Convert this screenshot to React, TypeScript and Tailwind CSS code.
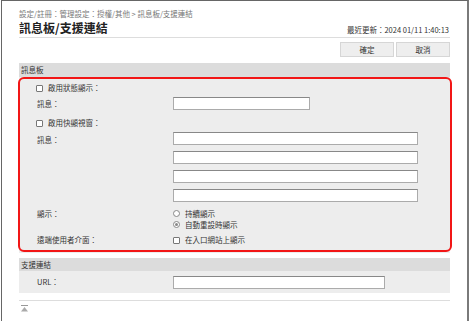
import React from 'react';

const font = { fontFamily: '"Noto Sans CJK TC", "Noto Sans", sans-serif' };

const Box: React.FC = () => (
  <span className="inline-block w-[7px] h-[7px] border border-[#777] bg-white rounded-[1px] shrink-0" />
);

const Radio: React.FC<{ on?: boolean }> = ({ on }) => (
  <span className="inline-flex items-center justify-center w-[7px] h-[7px] rounded-full border border-[#888] bg-white shrink-0">
    {on && <span className="w-[3px] h-[3px] rounded-full bg-[#888]" />}
  </span>
);

const Field: React.FC<{ w: string }> = ({ w }) => (
  <div className={`${w} h-[13px] bg-white border border-[#ababab] border-t-[#888]`} />
);

const Row: React.FC<{ label?: string; children?: React.ReactNode; className?: string }> = ({ label, children, className }) => (
  <div className={`flex ${className ?? ''}`}>
    <div className="w-[154px] shrink-0 pl-[18px]">{label}</div>
    <div className="flex-1">{children}</div>
  </div>
);

export default function App() {
  return (
    <div style={font} className="w-[470px] h-[321px] bg-white overflow-hidden text-[#333]">
      <div className="relative ml-[1px] mr-[1px] h-[321px] border-l border-t border-r-2 border-[#666] border-r-[#7a7a7a] pl-[17px] pr-[17px] pt-[8px]">
        <div className="text-[7.5px] leading-[10px] text-[#777]">設定/註冊：管理設定：授權/其他 &gt; 訊息板/支援連結</div>

        <div className="flex items-end justify-between h-[19px] border-b border-[#ddd] pb-[1px]">
          <div className="text-[12px] leading-[16px] font-bold text-[#222]">訊息板/支援連結</div>
          <div className="text-[7.5px] leading-[12px] text-[#333] pr-[1px]">最近更新：2024 01/11 1:40:13</div>
        </div>

        <div className="flex justify-end gap-[2px] mt-[4px]">
          <div className="w-[54px] h-[15px] bg-[#eee] border border-[#d6d6d6] flex items-center justify-center text-[7.5px]">確定</div>
          <div className="w-[54px] h-[15px] bg-[#eee] border border-[#d6d6d6] flex items-center justify-center text-[7.5px]">取消</div>
        </div>

        <div className="mt-[6px] h-[14px] bg-[#dcdcdc] flex items-center pl-[2px] text-[7.5px]">訊息板</div>

        <div className="relative bg-[#ededed] text-[7.5px] pt-[4px] pb-[7px]">
          <div className="absolute -left-[1px] -right-[2px] top-0 bottom-[1px] border-2 border-[#f21616] rounded-[6px] pointer-events-none" />
          <div className="flex items-center h-[14px] pl-[17px] gap-[5px]">
            <Box />
            <span>啟用狀態顯示：</span>
          </div>
          <Row label="訊息：" className="items-center mt-[2px]">
            <Field w="w-[137px]" />
          </Row>
          <div className="flex items-center h-[14px] pl-[17px] gap-[5px] mt-[6px]">
            <Box />
            <span>啟用快顯視窗：</span>
          </div>
          <Row label={undefined} className="mt-[2px]">
            <div className="relative flex flex-col gap-[6px]">
              <div className="absolute -left-[154px] top-[1px] pl-[18px] leading-[13px]">訊息：</div>
              <Field w="w-[245px]" />
              <Field w="w-[245px]" />
              <Field w="w-[245px]" />
              <Field w="w-[245px]" />
            </div>
          </Row>
          <Row label="顯示：" className="mt-[6px] leading-[11px]">
            <div className="flex flex-col">
              <div className="flex items-center gap-[5px] h-[11px]"><Radio /><span>持續顯示</span></div>
              <div className="flex items-center gap-[5px] h-[11px]"><Radio on /><span>自動重設時顯示</span></div>
            </div>
          </Row>
          <Row label="遠端使用者介面：" className="mt-[4px] items-center h-[12px]">
            <div className="flex items-center gap-[5px]"><Box /><span>在入口網站上顯示</span></div>
          </Row>
        </div>

        <div className="mt-[5px] h-[13px] bg-[#dcdcdc] flex items-center pl-[2px] text-[7.5px]">支援連結</div>
        <div className="h-[22px] bg-[#ededed] text-[7.5px] flex items-center">
          <Row label="URL：" className="items-center w-full">
            <Field w="w-[212px]" />
          </Row>
        </div>

        <div className="mt-[7px] border-t border-[#ddd]" />
        <div className="mt-[4px] pl-[2px]">
          <svg width="7" height="7" viewBox="0 0 7 7">
            <rect x="0" y="0" width="7" height="1" fill="#999" />
            <path d="M3.5 2 L7 6.5 L0 6.5 Z" fill="#aaa" />
          </svg>
        </div>
      </div>
    </div>
  );
}
